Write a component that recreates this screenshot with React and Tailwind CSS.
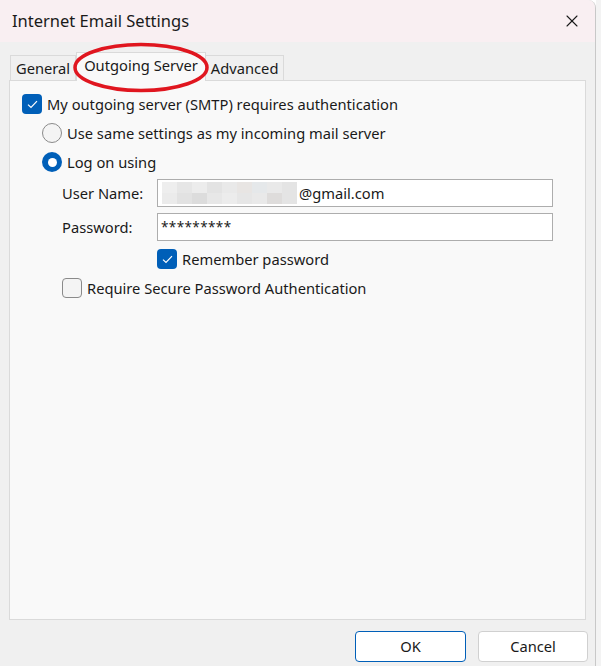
import { X } from 'lucide-react';

const font = { fontFamily: '"Noto Sans", "Open Sans", sans-serif' };

const blurColors = [
  ['#eeeeee', '#e6e6e6', '#ececec', '#e3e3e3', '#e9e9e9', '#e8e5e3', '#e5e8ea', '#e9e9e9', '#e4e4e4'],
  ['#ebebeb', '#e2e2e2', '#dcdcdc', '#e7e7e7', '#ececec', '#e6e6e6', '#e9e9e9', '#dedcdb', '#e4e4e4'],
];

const Check = ({ checked }) =>
  checked ? (
    <span className="w-5 h-5 rounded-[4px] bg-[#005fb8] flex items-center justify-center shrink-0">
      <svg width="11" height="9" viewBox="0 0 11 9" fill="none">
        <path d="M1 4.6 L4 7.5 L10 1.2" stroke="white" strokeWidth="1.2" />
      </svg>
    </span>
  ) : (
    <span className="w-5 h-5 rounded-[4px] border border-[#8a8a8a] bg-[#f4f4f4] shrink-0" />
  );

const Radio = ({ checked }) =>
  checked ? (
    <span className="w-5 h-5 rounded-full bg-[#005fb8] flex items-center justify-center shrink-0">
      <span className="w-[9px] h-[9px] rounded-full bg-white" />
    </span>
  ) : (
    <span className="w-5 h-5 rounded-full border border-[#8a8a8a] bg-[#f4f4f4] shrink-0" />
  );

export default function App() {
  return (
    <div className="flex w-[601px] h-[666px] bg-white text-[#1a1a1a]" style={font}>
      <div className="w-[596px] h-full bg-[#f0f0f0] rounded-tr-[8px] border-r border-[#c8c8c8] flex flex-col relative overflow-hidden">
        <div className="h-[42px] bg-[#f9eff2] flex items-center justify-between pl-[12px] pr-[13px] shrink-0">
          <span className="text-[16.5px] leading-none">Internet Email Settings</span>
          <X size={20} strokeWidth={1.3} className="text-[#1a1a1a]" />
        </div>

        <div className="flex items-end pl-[10px] h-[38px] shrink-0 text-[14.7px]">
          <div className="h-[25px] px-[5px] flex items-center border border-b-0 border-[#dadada] bg-[#f0f0f0]">General</div>
          <div className="h-[29px] px-[7px] flex items-center border border-b-0 border-[#dadada] bg-[#f9f9f9] -mb-px z-10 pb-[3px]">Outgoing Server</div>
          <div className="h-[25px] px-[5px] flex items-center border border-b-0 border-l-0 border-[#dadada] bg-[#f0f0f0]">Advanced</div>
        </div>

        <div className="ml-[9px] mr-[9px] h-[540px] bg-[#f9f9f9] border border-[#dadada] text-[14.7px] pt-[13px] pl-[12px] shrink-0">
          <div className="flex items-center gap-[5px] h-5">
            <Check checked />
            <span>My outgoing server (SMTP) requires authentication</span>
          </div>
          <div className="pl-[20px] mt-[9px] flex flex-col gap-[9px]">
            <div className="flex items-center gap-[5px] h-5">
              <Radio />
              <span>Use same settings as my incoming mail server</span>
            </div>
            <div className="flex items-center gap-[5px] h-5">
              <Radio checked />
              <span>Log on using</span>
            </div>
          </div>
          <div className="pl-[40px] mt-[7px]">
            <div className="flex items-center h-[28px]">
              <span className="w-[95px]">User Name:</span>
              <div className="w-[396px] h-[28px] bg-white border border-[#adadad] flex items-center pl-[4px]">
                <div className="flex flex-col">
                  {blurColors.map((row, i) => (
                    <div key={i} className="flex">
                      {row.map((c, j) => (
                        <span key={j} className="w-[15px] h-[11px]" style={{ background: c }} />
                      ))}
                    </div>
                  ))}
                </div>
                <span className="ml-[2px]">@gmail.com</span>
              </div>
            </div>
            <div className="flex items-center h-[28px] mt-[6px]">
              <span className="w-[95px]">Password:</span>
              <div className="w-[396px] h-[28px] bg-white border border-[#adadad] flex items-center pl-[3px] text-[13.5px] tracking-[0.4px]">*********</div>
            </div>
            <div className="flex items-center gap-[5px] h-5 mt-[8px] ml-[95px]">
              <Check checked />
              <span>Remember password</span>
            </div>
            <div className="flex items-center gap-[5px] h-5 mt-[9px]">
              <Check />
              <span>Require Secure Password Authentication</span>
            </div>
          </div>
        </div>

        <div className="flex justify-end gap-[12px] pr-[7px] mt-[11px] text-[14.7px]">
          <button className="w-[111px] h-[31px] rounded-[4px] bg-white border border-[#005fb8]">OK</button>
          <button className="w-[110px] h-[31px] rounded-[4px] bg-white border border-[#d0d0d0]">Cancel</button>
        </div>

        <svg className="absolute left-[72px] top-[42px] pointer-events-none z-20" width="138" height="52" viewBox="0 0 138 52">
          <ellipse cx="69" cy="25.5" rx="66" ry="23" fill="none" stroke="#e0161f" strokeWidth="3.5" />
        </svg>
      </div>
      <div className="flex-1 h-full bg-[#f3f3f3]" />
    </div>
  );
}
